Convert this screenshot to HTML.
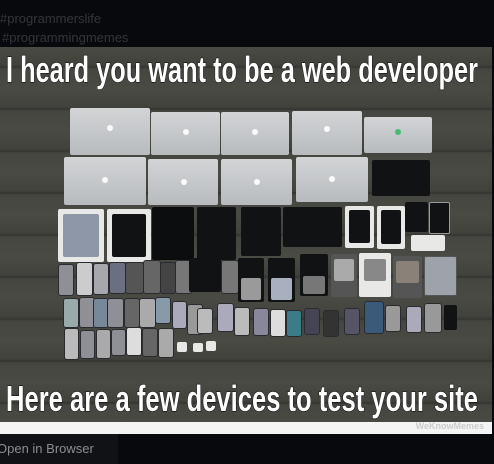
<!DOCTYPE html>
<html><head><style>
html,body{margin:0;padding:0}
body{width:494px;height:464px;background:#07090c;position:relative;overflow:hidden;font-family:"Liberation Sans",sans-serif}
.tag{position:absolute;left:0;color:#33363b;font-size:13px}
#img{position:absolute;left:0;top:47px;width:492px;height:387px;overflow:hidden;
background:repeating-linear-gradient(180deg,#4a4a44 0,#42423d 18px,#33332f 20px,#464641 22px,#4a4a44 42px);}
.d{position:absolute;border-radius:2px}
.l{background:linear-gradient(#d2d4d6,#b8bbbe);}
.w{background:#e8e8e6}
.k{background:#111214}
.p{background:#8e9096;border:1px solid #2a2b2e;border-radius:3px}
svg.cap{position:absolute;left:0;width:492px;height:50px}
svg.cap text{font-family:"Liberation Sans",sans-serif;font-weight:bold;fill:#fff;stroke:#111;stroke-width:1.2px;paint-order:stroke}
.strip{position:absolute;left:0;top:375px;width:492px;height:12px;background:#f4f4f4}
.wm{position:absolute;right:8px;top:374px;font-size:9px;color:#ccc;font-weight:bold}
.logo{position:absolute;width:6px;height:6px;background:#fff;border-radius:50%;opacity:.9}
</style></head><body>
<div class="tag" style="top:11px">#programmerslife</div>
<div class="tag" style="top:30px;left:2px">#programmingmemes</div>
<div id="img">
<svg class="cap" style="top:0"><text x="6" y="35" font-size="36" textLength="472" lengthAdjust="spacingAndGlyphs">I heard you want to be a web developer</text></svg>
<div class="d l" style="left:70px;top:61px;width:80px;height:47px"></div>
<div class="d l" style="left:151px;top:65px;width:69px;height:43px"></div>
<div class="d l" style="left:221px;top:65px;width:68px;height:43px"></div>
<div class="d l" style="left:292px;top:64px;width:70px;height:44px"></div>
<div class="d l" style="left:364px;top:70px;width:68px;height:36px"></div>
<div class="d l" style="left:64px;top:110px;width:82px;height:48px"></div>
<div class="d l" style="left:148px;top:112px;width:70px;height:46px"></div>
<div class="d l" style="left:221px;top:112px;width:71px;height:46px"></div>
<div class="d l" style="left:296px;top:110px;width:72px;height:45px"></div>
<div class="d k" style="left:372px;top:113px;width:58px;height:36px"></div>
<div class="logo" style="left:107px;top:78px"></div><div class="logo" style="left:183px;top:82px"></div><div class="logo" style="left:252px;top:82px"></div><div class="logo" style="left:324px;top:79px"></div><div class="logo" style="left:395px;top:82px;background:#3b6"></div>
<div class="logo" style="left:102px;top:130px"></div><div class="logo" style="left:181px;top:132px"></div><div class="logo" style="left:254px;top:132px"></div><div class="logo" style="left:329px;top:129px"></div>
<div class="d w" style="left:58px;top:162px;width:46px;height:53px"></div><div class="d" style="left:63px;top:167px;width:36px;height:43px;background:#8e97a8"></div>
<div class="d w" style="left:107px;top:162px;width:44px;height:53px"></div><div class="d k" style="left:112px;top:167px;width:34px;height:43px"></div>
<div class="d k" style="left:152px;top:160px;width:42px;height:53px;background:#0c0d0f"></div>
<div class="d k" style="left:197px;top:160px;width:39px;height:53px"></div>
<div class="d k" style="left:241px;top:160px;width:40px;height:49px"></div>
<div class="d k" style="left:283px;top:160px;width:59px;height:40px"></div>
<div class="d w" style="left:345px;top:159px;width:29px;height:42px"></div><div class="d k" style="left:349px;top:163px;width:21px;height:33px"></div>
<div class="d w" style="left:377px;top:159px;width:28px;height:43px"></div><div class="d k" style="left:381px;top:163px;width:20px;height:34px"></div>
<div class="d k" style="left:405px;top:155px;width:23px;height:30px"></div>
<div class="d k" style="left:429px;top:155px;width:19px;height:30px;border:1px solid #999"></div>
<div class="d w" style="left:411px;top:188px;width:34px;height:16px"></div>
<div class="d p" style="left:58px;top:217px;width:14px;height:30px"></div>
<div class="d p" style="left:76px;top:215px;width:15px;height:32px;background:#ccc"></div>
<div class="d p" style="left:93px;top:216px;width:14px;height:30px;background:#a7a8ae"></div>
<div class="d p" style="left:109px;top:215px;width:15px;height:30px;background:#6a7080"></div>
<div class="d p" style="left:125px;top:215px;width:17px;height:30px;background:#555"></div>
<div class="d p" style="left:143px;top:213px;width:16px;height:32px;background:#666"></div>
<div class="d p" style="left:160px;top:215px;width:14px;height:30px;background:#444"></div>
<div class="d p" style="left:175px;top:213px;width:15px;height:32px;background:#777"></div>
<div class="d k" style="left:189px;top:211px;width:32px;height:34px"></div>
<div class="d p" style="left:221px;top:213px;width:16px;height:32px;background:#777"></div>
<div class="d k" style="left:238px;top:211px;width:26px;height:44px"></div><div class="d" style="left:241px;top:231px;width:20px;height:22px;background:#9a9a9a"></div>
<div class="d k" style="left:268px;top:211px;width:27px;height:44px"></div><div class="d" style="left:271px;top:231px;width:21px;height:22px;background:#a8b0c0"></div>
<div class="d k" style="left:300px;top:207px;width:28px;height:42px"></div><div class="d" style="left:303px;top:229px;width:22px;height:18px;background:#777"></div>
<div class="d" style="left:331px;top:207px;width:26px;height:43px;background:#555"></div><div class="d" style="left:334px;top:212px;width:20px;height:22px;background:#aaa"></div>
<div class="d w" style="left:359px;top:206px;width:32px;height:44px"></div><div class="d" style="left:364px;top:212px;width:22px;height:22px;background:#888"></div>
<div class="d" style="left:393px;top:209px;width:29px;height:42px;background:#555"></div><div class="d" style="left:396px;top:214px;width:23px;height:22px;background:#8a8278"></div>
<div class="d" style="left:424px;top:209px;width:31px;height:38px;background:#9ea3aa;border:1px solid #555"></div>
<div class="d p" style="left:63px;top:251px;width:14px;height:28px;background:#9aa"></div>
<div class="d p" style="left:79px;top:250px;width:14px;height:29px"></div>
<div class="d p" style="left:93px;top:251px;width:14px;height:28px;background:#789"></div>
<div class="d p" style="left:107px;top:251px;width:15px;height:28px"></div>
<div class="d p" style="left:124px;top:251px;width:14px;height:28px;background:#666"></div>
<div class="d p" style="left:139px;top:251px;width:15px;height:28px;background:#aaa"></div>
<div class="d p" style="left:155px;top:250px;width:14px;height:25px;background:#89a"></div>
<div class="d p" style="left:172px;top:254px;width:13px;height:26px;background:#aab"></div>
<div class="d p" style="left:187px;top:257px;width:14px;height:29px;background:#999"></div>
<div class="d p" style="left:197px;top:261px;width:14px;height:24px;background:#bbb"></div>
<div class="d p" style="left:217px;top:256px;width:15px;height:27px;background:#aab"></div>
<div class="d p" style="left:234px;top:260px;width:14px;height:27px;background:#bbb"></div>
<div class="d p" style="left:253px;top:261px;width:14px;height:26px;background:#889"></div>
<div class="d p" style="left:270px;top:262px;width:14px;height:26px;background:#ddd"></div>
<div class="d p" style="left:286px;top:263px;width:14px;height:25px;background:#3b7b8a"></div>
<div class="d p" style="left:304px;top:261px;width:14px;height:25px;background:#445"></div>
<div class="d p" style="left:323px;top:263px;width:14px;height:25px;background:#333"></div>
<div class="d p" style="left:344px;top:261px;width:14px;height:25px;background:#556"></div>
<div class="d p" style="left:364px;top:254px;width:18px;height:31px;background:#3b5a7a"></div>
<div class="d p" style="left:385px;top:258px;width:14px;height:25px;background:#999"></div>
<div class="d p" style="left:406px;top:259px;width:14px;height:25px;background:#aab"></div>
<div class="d p" style="left:424px;top:256px;width:16px;height:28px;background:#999"></div>
<div class="d k" style="left:444px;top:258px;width:13px;height:25px"></div>
<div class="d p" style="left:64px;top:281px;width:13px;height:30px;background:#bbb"></div>
<div class="d p" style="left:80px;top:283px;width:13px;height:27px"></div>
<div class="d p" style="left:96px;top:282px;width:13px;height:28px;background:#aaa"></div>
<div class="d p" style="left:111px;top:282px;width:13px;height:25px"></div>
<div class="d p" style="left:126px;top:280px;width:14px;height:27px;background:#ddd"></div>
<div class="d p" style="left:142px;top:281px;width:14px;height:27px;background:#666"></div>
<div class="d p" style="left:158px;top:281px;width:14px;height:28px;background:#aaa"></div>
<div class="d w" style="left:177px;top:295px;width:10px;height:10px"></div>
<div class="d w" style="left:193px;top:296px;width:10px;height:9px"></div>
<div class="d w" style="left:206px;top:294px;width:10px;height:10px"></div>
<svg class="cap" style="top:327px"><text x="6" y="37" font-size="36" textLength="472" lengthAdjust="spacingAndGlyphs">Here are a few devices to test your site</text></svg>
<div class="strip"></div>
<div class="wm">WeKnowMemes</div>
</div>
<div style="position:absolute;left:0;top:434px;width:118px;height:30px;background:#101216"></div>
<div style="position:absolute;left:-3px;top:441px;color:#8a8d92;font-size:13px">Open in Browser</div>
</body></html>
